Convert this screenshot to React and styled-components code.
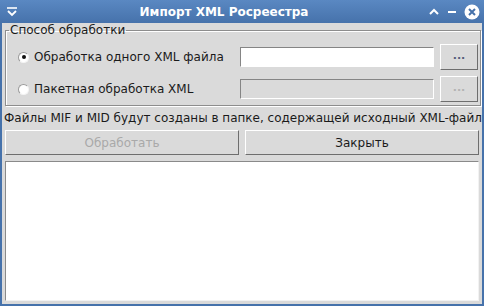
import styled, { createGlobalStyle } from "styled-components"

const Global = createGlobalStyle`
  html, body { margin: 0; padding: 0; }
  body {
    width: 484px;
    height: 306px;
    overflow: hidden;
    font-family: "DejaVu Sans", "Liberation Sans", sans-serif;
    font-size: 12px;
    color: #1a1a1a;
  }
`

const Window = styled.div`
  width: 484px;
  height: 306px;
  display: flex;
  flex-direction: column;
  background: #4672ab;
  box-sizing: border-box;
`

const TitleBar = styled.div`
  height: 23px;
  flex: none;
  display: flex;
  align-items: center;
  padding: 0 4px 0 6px;
  background: linear-gradient(#5a88c2, #4672ab);
  color: #fff;
`

const Title = styled.div`
  flex: 1;
  text-align: center;
  font-weight: bold;
  font-size: 12px;
  padding-left: 2px;
`

const TitleButtons = styled.div`
  display: flex;
  align-items: center;
  gap: 6px;
`

const Body = styled.div`
  flex: 1;
  margin: 0 2px 2px 2px;
  background: #dadada;
  display: flex;
  flex-direction: column;
  padding: 0 3px 3px 3px;
  min-height: 0;
`

const Group = styled.fieldset`
  margin: 0;
  padding: 7px 2px 3px 12px;
  border: 1px solid #8d8d8d;
  box-shadow: inset 1px 1px 0 #fff, 1px 1px 0 #fff;
  display: flex;
  flex-direction: column;
  gap: 6px;
`

const Legend = styled.legend`
  padding: 0 1px;
  margin-left: -9px;
  font-size: 12px;
`

const Row = styled.div`
  display: flex;
  align-items: center;
  height: 26px;
`

const Radio = styled.span`
  width: 9px;
  height: 9px;
  border-radius: 50%;
  background: #fff;
  border: 1px solid;
  border-color: #9a9a9a #f4f4f4 #f4f4f4 #9a9a9a;
  display: flex;
  align-items: center;
  justify-content: center;
  margin-right: 5px;
  &::after {
    content: "";
    width: 4px;
    height: 4px;
    border-radius: 50%;
    background: ${(p) => (p.$on ? "#111" : "transparent")};
  }
`

const RadioLabel = styled.span`
  width: 206px;
`

const Field = styled.div`
  width: 192px;
  height: 18px;
  background: ${(p) => (p.$disabled ? "#dadada" : "#fff")};
  border: 1px solid;
  border-color: #858585 #fff #fff #858585;
  margin-right: 6px;
`

const Dots = styled.button`
  width: 38px;
  height: 26px;
  background: #dadada;
  border: 1px solid;
  border-color: #fff #6e6e6e #6e6e6e #fff;
  font-family: inherit;
  font-size: 11px;
  font-weight: bold;
  color: ${(p) => (p.disabled ? "#b3b3b3" : "#555e7a")};
  padding: 0 0 4px 0;
`

const Note = styled.div`
  margin: 5px 0 5px -1px;
  white-space: nowrap;
`

const Buttons = styled.div`
  display: grid;
  grid-template-columns: 1fr 1fr;
  gap: 6px;
`

const Button = styled.button`
  height: 25px;
  background: #dadada;
  border: 1px solid;
  border-color: #fff #6e6e6e #6e6e6e #fff;
  font-family: inherit;
  font-size: 12px;
  color: #1a1a1a;
  &:disabled { color: #a9a9a9; }
`

const Log = styled.div`
  flex: 1;
  margin-top: 6px;
  background: #fff;
  border: 1px solid;
  border-color: #8a8a8a #f2f2f2 #f2f2f2 #8a8a8a;
`

function MenuIcon() {
  return (
    <svg width="12" height="12" viewBox="0 0 12 12">
      <path d="M1 2h10" stroke="#fff" strokeWidth="1.6" />
      <path d="M2 5l4 4 4-4" stroke="#fff" strokeWidth="1.8" fill="none" />
    </svg>
  )
}

export default function App() {
  return (
    <Window>
      <Global />
      <TitleBar>
        <MenuIcon />
        <Title>Импорт XML Росреестра</Title>
        <TitleButtons>
          <svg width="12" height="12" viewBox="0 0 12 12">
            <path d="M2 8l4-4 4 4" stroke="#fff" strokeWidth="2" fill="none" />
          </svg>
          <svg width="12" height="12" viewBox="0 0 12 12">
            <path d="M2 6h8" stroke="#fff" strokeWidth="2" />
          </svg>
          <svg width="16" height="16" viewBox="0 0 16 16">
            <circle cx="8" cy="8" r="7.5" fill="#fff" />
            <path d="M5 5l6 6M11 5l-6 6" stroke="#4672ab" strokeWidth="2" />
          </svg>
        </TitleButtons>
      </TitleBar>
      <Body>
        <Group>
          <Legend>Способ обработки</Legend>
          <Row>
            <Radio $on />
            <RadioLabel>Обработка одного XML файла</RadioLabel>
            <Field />
            <Dots>...</Dots>
          </Row>
          <Row>
            <Radio />
            <RadioLabel>Пакетная обработка XML</RadioLabel>
            <Field $disabled />
            <Dots disabled>...</Dots>
          </Row>
        </Group>
        <Note>Файлы MIF и MID будут созданы в папке, содержащей исходный XML-файл</Note>
        <Buttons>
          <Button disabled>Обработать</Button>
          <Button>Закрыть</Button>
        </Buttons>
        <Log />
      </Body>
    </Window>
  )
}
